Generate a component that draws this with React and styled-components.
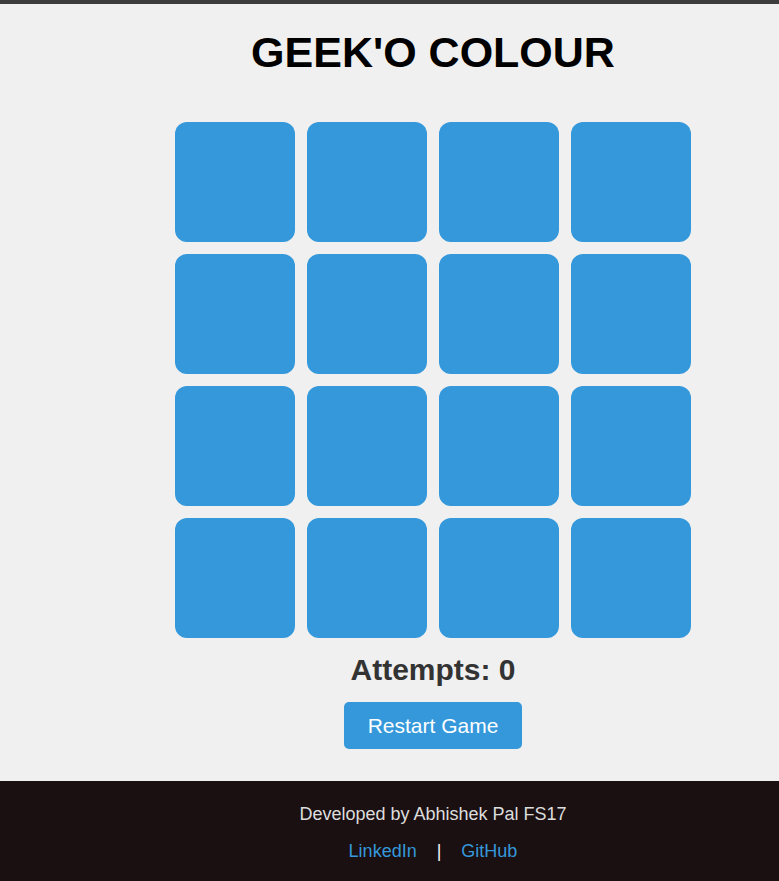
import React, { useState } from 'react';
import styled, { createGlobalStyle } from 'styled-components';

const GlobalStyle = createGlobalStyle`
    html, body {
        margin: 0;
        padding: 0;
        background: #F0F0F0;
        font-family: "Liberation Sans", Arial, sans-serif;
    }
    body {
        border-top: 4px solid #3d3d3d;
    }
`
const Page = styled.div`
    display: flex;
    flex-direction: column;
    min-height: calc(100vh - 4px);
`
const Main = styled.main`
    flex: 1;
    display: flex;
    flex-direction: column;
    align-items: center;
    padding: 0 0 32px 87px;
`
const Title = styled.h1`
    font-size: 43px;
    line-height: 48px;
    font-weight: 700;
    color: #000000;
    margin: 24px 0 46px;
`
const Board = styled.div`
    display: grid;
    grid-template-columns: repeat(4, 120px);
    grid-auto-rows: 120px;
    gap: 12px;
`
const Card = styled.div`
    background-color: ${({ color }) => color || '#3498DB'};
    border-radius: 12px;
    cursor: pointer;
`
const Attempts = styled.h2`
    font-size: 30px;
    line-height: 36px;
    font-weight: 700;
    color: #333333;
    margin: 14px 0;
`
const RestartBtn = styled.button`
    font-family: inherit;
    font-size: 21px;
    line-height: 24px;
    padding: 12px 24px 11px;
    color: #FFFFFF;
    background-color: #3498DB;
    border: none;
    border-radius: 5px;
    cursor: pointer;
`
const Footer = styled.footer`
    background-color: #1b1011;
    color: #dddddd;
    font-size: 18px;
    line-height: 21px;
    padding: 23px 0 19px 87px;
    display: flex;
    flex-direction: column;
    align-items: center;
    gap: 16px;

    p {
        margin: 0;
    }
`
const Links = styled.div`
    display: flex;
    align-items: center;
    gap: 20px;

    a {
        color: #3498DB;
        text-decoration: none;
    }

    span {
        color: #f5f5f5;
    }
`

const App = () => {
    const [attempts, setAttempts] = useState(0)
    const cards = Array.from({ length: 16 }, (_, i) => i)

    return (
        <Page>
            <GlobalStyle />
            <Main>
                <Title>GEEK'O COLOUR</Title>
                <Board>
                    {cards.map((key) => <Card key={key} onClick={() => setAttempts(attempts + 1)} />)}
                </Board>
                <Attempts>Attempts: {attempts}</Attempts>
                <RestartBtn onClick={() => setAttempts(0)}>Restart Game</RestartBtn>
            </Main>
            <Footer>
                <p>Developed by Abhishek Pal FS17</p>
                <Links>
                    <a href="#linkedin">LinkedIn</a>
                    <span>|</span>
                    <a href="#github">GitHub</a>
                </Links>
            </Footer>
        </Page>
    )
}

export default App;
